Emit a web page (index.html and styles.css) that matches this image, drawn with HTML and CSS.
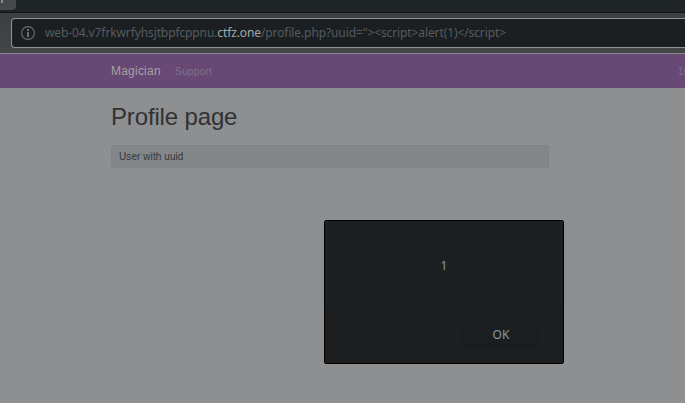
FILE: index.html
```html
<!DOCTYPE html>
<html lang="en">
<head>
<meta charset="utf-8">
<title>Profile page</title>
<link rel="stylesheet" href="styles.css">
</head>
<body>
<div class="tabs"><div class="tab"><span class="tab-mark"></span></div></div>
<div class="toolbar">
  <div class="address">
    <svg class="info" viewBox="0 0 14 14" width="14" height="14"><circle cx="7" cy="7" r="6.4" fill="none" stroke="currentColor" stroke-width="1.1"/><path d="M6 3h2v2H6zM6 6h2v5H6z" fill="currentColor"/></svg>
    <span class="url">web-04.v7frkwrfyhsjtbpfcppnu.<span class="domain">ctfz.one</span>/profile.php?uuid="&gt;&lt;script&gt;alert(1)&lt;/script&gt;</span>
  </div>
</div>
<div class="page">
  <nav class="nav">
    <span class="brand">Magician</span>
    <span class="link">Support</span>
    <span class="count">10</span>
  </nav>
  <main class="content">
    <h1 class="title">Profile page</h1>
    <div class="panel">User with uuid</div>
  </main>
  <div class="dialog" role="dialog">
    <div class="message">1</div>
    <div class="actions"><button class="ok">OK</button></div>
  </div>
</div>
</body>
</html>
```
FILE: styles.css
```css
* { box-sizing: border-box; }
body {
  margin: 0;
  width: 685px;
  height: 403px;
  overflow: hidden;
  background: #1f2325;
  font-family: "Liberation Sans", Arial, sans-serif;
}
.tabs { height: 13px; background: #1f2427; border-bottom: 1px solid #121415; }
.tab {
  width: 16px;
  height: 10px;
  background: #45494b;
  border-radius: 0 0 4px 0;
}
.tab-mark { display: block; width: 2px; height: 3px; margin-left: 1px; background: #85898b; }
.toolbar {
  height: 41px;
  padding: 5px 0 0 11px;
  background: linear-gradient(#3c3f40, #434647);
  border-bottom: 1px solid #868c90;
}
.address {
  display: flex;
  align-items: center;
  height: 30px;
  padding-left: 9px;
  background: #1b1f21;
  border: 1px solid #89949b;
  border-right: 0;
  border-radius: 4px 0 0 4px;
}
.info { flex: none; color: #6b7072; }
.url {
  margin-left: 10px;
  font: 12px/16px "Noto Sans", sans-serif;
  letter-spacing: -.11px;
  color: #555c60;
  white-space: nowrap;
}
.domain { color: #a0a8ac; }
.page {
  position: relative;
  height: 349px;
  background: #909192;
}
.page::after {
  content: "";
  position: absolute;
  inset: 0;
  background:
    conic-gradient(rgba(40, 50, 60, .05) 25%, transparent 0 50%, rgba(40, 50, 60, .05) 0 75%, transparent 0) 0 0 / 4px 4px;
  pointer-events: none;
}
.nav {
  display: flex;
  align-items: center;
  height: 34px;
  padding-left: 111px;
  background: #694976;
}
.brand { width: 64px; font-size: 12px; letter-spacing: .22px; color: #a3a3a5; }
.link { font-size: 10px; letter-spacing: .3px; color: #847390; }
.count { margin-left: auto; margin-right: -4px; font-size: 10px; color: #847390; }
.content { padding: 13px 136px 0 111px; }
.title {
  margin: 0;
  font-size: 24px;
  line-height: 32px;
  font-weight: 400;
  letter-spacing: -.15px;
  color: #303234;
}
.panel {
  height: 23px;
  margin-top: 12px;
  padding-left: 7px;
  border: 1px solid #838688;
  border-radius: 2px;
  background: #86898b;
  font-size: 10px;
  line-height: 21px;
  letter-spacing: .08px;
  color: #35383a;
}
.dialog {
  position: absolute;
  z-index: 1;
  left: 324px;
  top: 166px;
  width: 240px;
  height: 144px;
  border: 1px solid #000;
  border-radius: 2px;
  background: #1c1e1f;
  font: 12px/16px "Noto Sans", sans-serif;
  color: #8c989f;
}
.message {
  height: 88px;
  padding-top: 37px;
  background: #1c2022;
  text-align: center;
}
.actions { display: flex; justify-content: flex-end; padding: 14px 25px 0 0; }
.ok {
  width: 76px;
  height: 24px;
  padding: 0 0 0 2px;
  border: 1px solid #181b1c;
  border-radius: 3px;
  background: linear-gradient(#1b1f20, #1a1e20);
  font: 12px/16px "Noto Sans", sans-serif;
  color: #8c989f;
}
```
